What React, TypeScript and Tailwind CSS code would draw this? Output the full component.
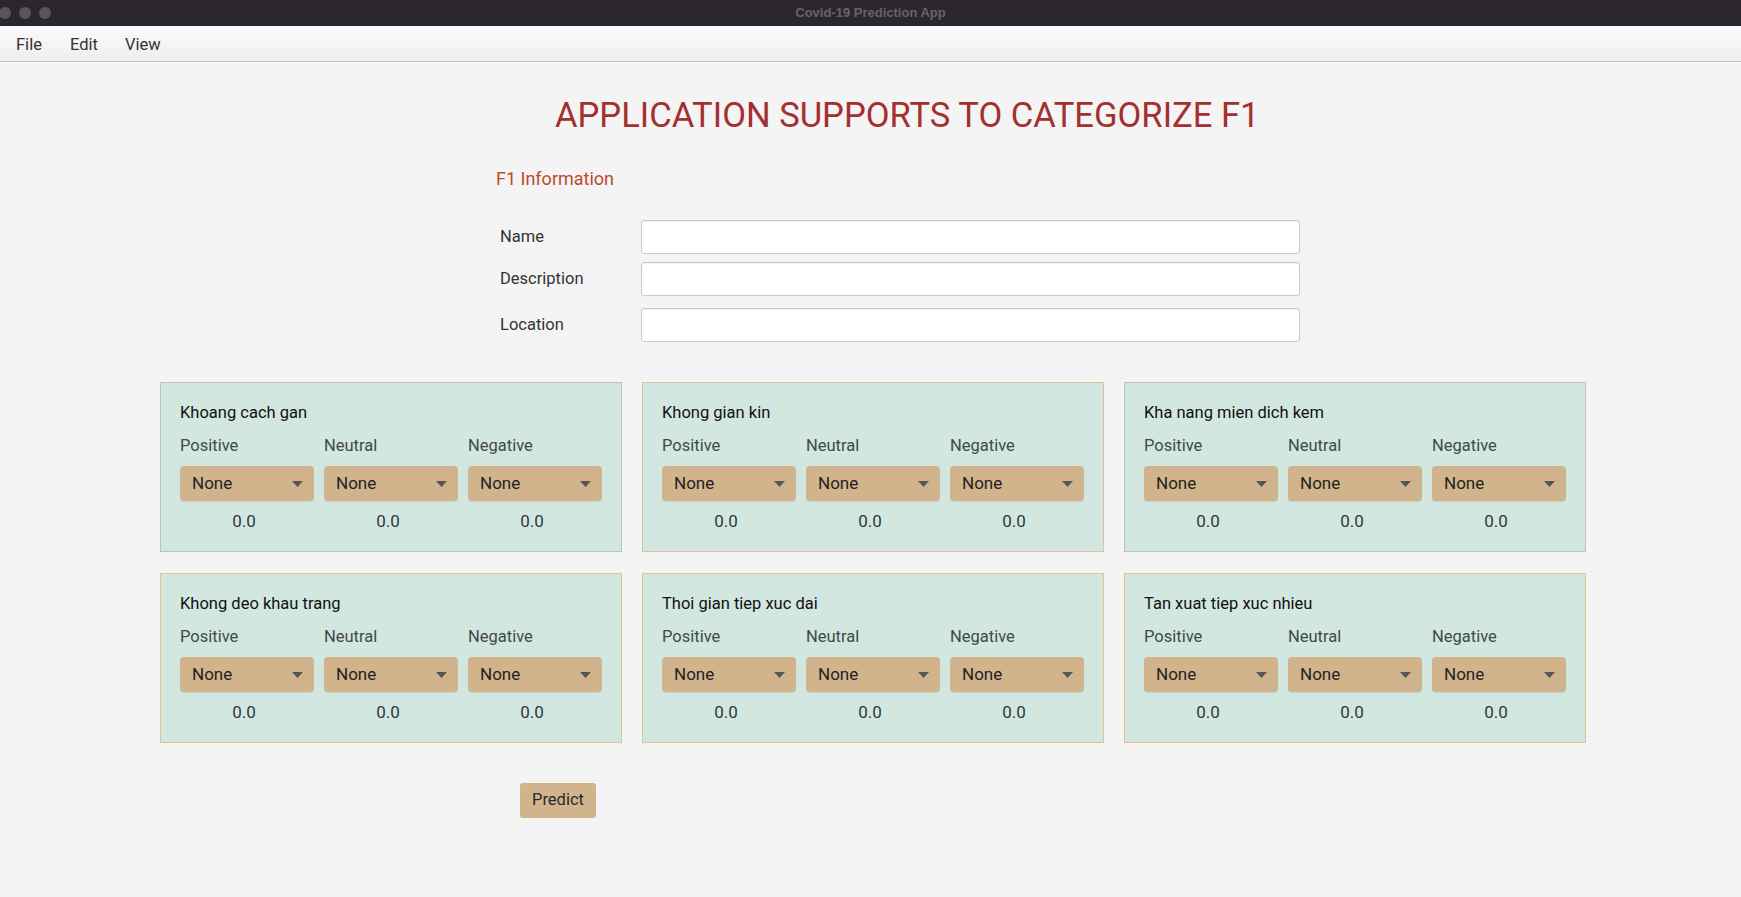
import React from 'react';

const factors = [
  { title: 'Khoang cach gan', border: 'border-[#b7c3be]' },
  { title: 'Khong gian kin', border: 'border-[#d9c3a2]' },
  { title: 'Kha nang mien dich kem', border: 'border-[#b7c3be]' },
  { title: 'Khong deo khau trang', border: 'border-[#e3c394]' },
  { title: 'Thoi gian tiep xuc dai', border: 'border-[#e3c394]' },
  { title: 'Tan xuat tiep xuc nhieu', border: 'border-[#e3c394]' },
];

const levels = ['Positive', 'Neutral', 'Negative'];

const Dropdown = () => (
  <div className="flex h-[35px] w-[134px] items-center justify-between rounded-[4px] bg-[#d2b48c] pl-[12px] pr-[11px] shadow-[0_1px_1px_rgba(0,0,0,0.08)]">
    <span className="text-[17px] text-[#222]">None</span>
    <svg width="11" height="6" viewBox="0 0 11 6">
      <path d="M0 0 L11 0 L5.5 6 Z" fill="#565656" />
    </svg>
  </div>
);

const FactorCard = ({ title, border }: { title: string; border: string }) => (
  <div className={`h-[170px] border ${border} bg-[#d1e7df] px-[19px] pt-[20px]`}>
    <div className="text-[16.5px] leading-[20px] text-[#111]">{title}</div>
    <div className="mt-[13px] grid grid-cols-[134px_134px_134px] gap-x-[10px]">
      {levels.map((level) => (
        <div key={level} className="flex flex-col">
          <div className="text-[16.5px] leading-[20px] text-[#3f4a48]">{level}</div>
          <div className="mt-[10px]">
            <Dropdown />
          </div>
          <div className="mt-[10px] w-[128px] text-center text-[17px] leading-[20px] text-[#2f3a38]">0.0</div>
        </div>
      ))}
    </div>
  </div>
);

const Field = ({ label, className }: { label: string; className?: string }) => (
  <div className={`flex items-center ${className ?? ''}`}>
    <label className="w-[141px] text-[16.5px] text-[#333]">{label}</label>
    <div className="h-[34px] w-[659px] rounded-[3px] border border-[#c9c9c9] bg-white shadow-[inset_0_1px_1px_rgba(0,0,0,0.06)]" />
  </div>
);

export default function App() {
  return (
    <div className="flex h-[897px] flex-col bg-[#f4f4f4] font-['Roboto',sans-serif]">
      {/* Window title bar */}
      <div className="relative flex h-[26px] items-center justify-center bg-[#2c272e]">
        <div className="absolute left-[-1px] top-[7px] flex gap-[8px]">
          <span className="h-[12px] w-[12px] rounded-full bg-[#58565a]" />
          <span className="h-[12px] w-[12px] rounded-full bg-[#58565a]" />
          <span className="h-[12px] w-[12px] rounded-full bg-[#58565a]" />
        </div>
        <span className="font-['Liberation_Sans',sans-serif] text-[13px] font-bold text-[#676369]">
          Covid-19 Prediction App
        </span>
      </div>

      {/* Menu bar */}
      <div className="flex h-[36px] items-center border-b border-[#c4c4c4] bg-gradient-to-b from-[#fbfbfb] to-[#eeeeee] pl-[16px] pt-[4px] text-[16.5px] text-[#333]">
        <span className="w-[54px]">File</span>
        <span className="w-[55px]">Edit</span>
        <span>View</span>
      </div>

      {/* Content */}
      <div className="flex flex-col">
        <h1 className="ml-[555px] mt-[33px] text-[34.6px] leading-[40px] text-[#a3302f]">
          APPLICATION SUPPORTS TO CATEGORIZE F1
        </h1>

        <div className="ml-[496px] mt-[33px] text-[18px] leading-[22px] text-[#bd4a2c]">F1 Information</div>

        <div className="ml-[500px] mt-[30px] flex flex-col">
          <Field label="Name" />
          <Field label="Description" className="mt-[8px]" />
          <Field label="Location" className="mt-[12px]" />
        </div>

        <div className="ml-[160px] mt-[40px] grid w-[1426px] grid-cols-3 gap-x-[20px] gap-y-[21px]">
          {factors.map((f) => (
            <FactorCard key={f.title} title={f.title} border={f.border} />
          ))}
        </div>

        <div className="ml-[520px] mt-[40px]">
          <button className="h-[35px] w-[76px] rounded-[3px] bg-[#d2b48c] text-[16.5px] text-[#1f2d2d]">Predict</button>
        </div>
      </div>
    </div>
  );
}
